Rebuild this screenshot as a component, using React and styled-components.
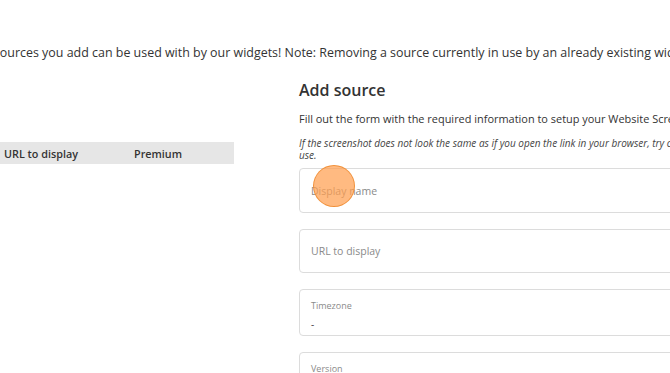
import React from 'react'
import styled, { createGlobalStyle } from 'styled-components'

const GlobalStyle = createGlobalStyle`
    html, body {
        margin: 0;
        padding: 0;
        background: #fff;
        overflow: hidden;
    }
    body {
        font-family: "Open Sans", "Noto Sans", sans-serif;
        color: #333;
    }
`

const App = () => {
    return (
        <>
            <GlobalStyle />
            <Page>
                <Intro>
                    Sources you add can be used with by our widgets! Note: Removing a source currently in use by an already existing widget will break it.
                </Intro>
                <Columns>
                    <ListColumn>
                        <TableHead>
                            <HeadCell width="130px">URL to display</HeadCell>
                            <HeadCell width="100px">Premium</HeadCell>
                        </TableHead>
                    </ListColumn>
                    <FormColumn>
                        <Title>Add source</Title>
                        <Lead>Fill out the form with the required information to setup your Website Screenshot source.</Lead>
                        <Hint>
                            If the screenshot does not look the same as if you open the link in your browser, try changing the version or timezone the source should
                            <br />
                            use.
                        </Hint>
                        <Fields>
                            <Field h="45px">
                                <Placeholder>Display name</Placeholder>
                                <ClickMark />
                            </Field>
                            <Field h="44px">
                                <Placeholder>URL to display</Placeholder>
                            </Field>
                            <Field h="47px" labelled>
                                <SmallLabel>Timezone</SmallLabel>
                                <Value>-</Value>
                            </Field>
                            <Field h="47px" labelled>
                                <SmallLabel>Version</SmallLabel>
                                <Value>-</Value>
                            </Field>
                        </Fields>
                    </FormColumn>
                </Columns>
            </Page>
        </>
    )
}

export default App

const Page = styled.div`
    margin-left: -7px;
    padding-top: 44px;
    width: 1100px;
`

const Intro = styled.p`
    margin: 0;
    font-size: 12.45px;
    line-height: 18px;
    color: #333;
    white-space: nowrap;
`

const Columns = styled.div`
    display: flex;
    gap: 65px;
    margin-top: 17px;
`

const ListColumn = styled.div`
    width: 241px;
    padding-top: 63px;
`

const TableHead = styled.div`
    display: flex;
    align-items: center;
    height: 22px;
    background: #e6e6e6;
    padding-left: 11px;
`

const HeadCell = styled.div`
    width: ${p => p.width};
    font-size: 10.8px;
    font-weight: 600;
    color: #333;
`

const FormColumn = styled.div`
    width: 520px;
`

const Title = styled.h2`
    margin: 0;
    font-size: 16px;
    font-weight: 600;
    line-height: 22px;
    color: #333;
`

const Lead = styled.p`
    margin: 10px 0 0;
    font-size: 10.95px;
    line-height: 16px;
    color: #333;
    white-space: nowrap;
`

const Hint = styled.p`
    margin: 10px 0 0;
    font-size: 10px;
    font-style: italic;
    line-height: 12px;
    color: #444;
    white-space: nowrap;
`

const Fields = styled.div`
    display: flex;
    flex-direction: column;
    gap: 16px;
    margin-top: 7px;
`

const Field = styled.div`
    position: relative;
    box-sizing: border-box;
    height: ${p => p.h};
    border: 1px solid #dcdcdc;
    border-radius: 4px;
    padding: ${p => (p.labelled ? '10px 11px 0' : '0 11px')};
    display: flex;
    flex-direction: column;
    justify-content: ${p => (p.labelled ? 'flex-start' : 'center')};
`

const Placeholder = styled.span`
    font-size: 10.5px;
    color: #8a8a8a;
`

const SmallLabel = styled.span`
    font-size: 9px;
    line-height: 12px;
    color: #8a8a8a;
`

const Value = styled.span`
    margin-top: 5px;
    font-size: 10px;
    line-height: 14px;
    color: #444;
`

const ClickMark = styled.div`
    position: absolute;
    left: 13px;
    top: -4px;
    width: 42px;
    height: 42px;
    border-radius: 50%;
    background: rgba(255, 160, 80, 0.72);
    border: 1.5px solid rgba(240, 140, 50, 0.9);
    box-sizing: border-box;
`
